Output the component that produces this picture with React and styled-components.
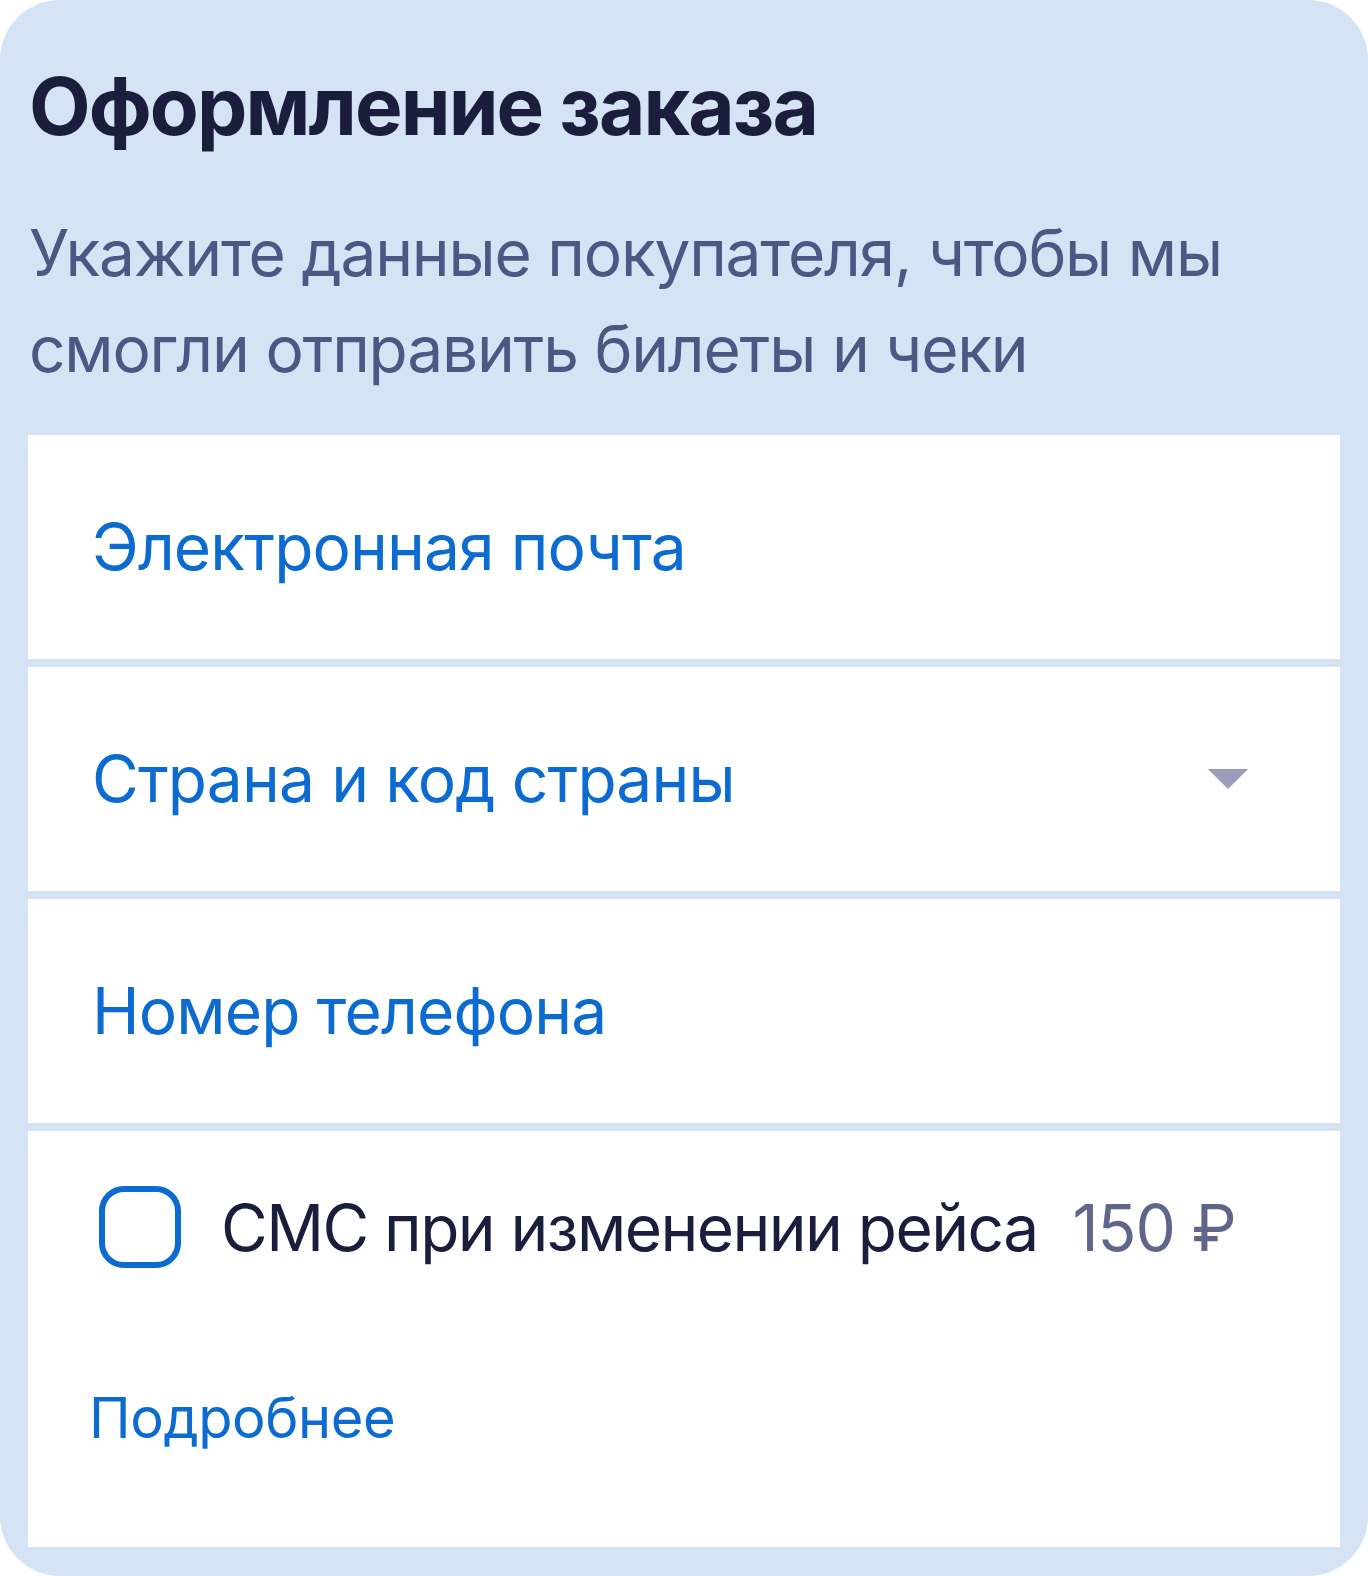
import React from "react";
import styled, { createGlobalStyle } from "styled-components";

const GlobalStyle = createGlobalStyle`
  html, body {
    margin: 0;
    padding: 0;
    background: #ffffff;
  }
  body {
    font-family: Inter, "Noto Sans", sans-serif;
  }
`;

const Card = styled.section`
  box-sizing: border-box;
  width: 1368px;
  min-height: 1576px;
  background: #d5e4f4;
  border-radius: 60px;
  padding: 58px 28px 28px;
  display: flex;
  flex-direction: column;
`;

const Title = styled.h1`
  margin: 0 0 0 1px;
  font-size: 80px;
  line-height: 96px;
  font-weight: 700;
  color: #1a1e3c;
  letter-spacing: -1.9px;
`;

const Subtitle = styled.p`
  margin: 51px 0 38px 1px;
  font-size: 64px;
  line-height: 96px;
  font-weight: 400;
  color: #4b5883;
  letter-spacing: -1.2px;
`;

const Fields = styled.div`
  display: flex;
  flex-direction: column;
  gap: 8px;
`;

const Field = styled.div`
  box-sizing: border-box;
  height: 224px;
  background: #ffffff;
  display: flex;
  align-items: center;
  justify-content: space-between;
  padding: 0 92px 0 64px;
`;

const Label = styled.span`
  font-size: 64px;
  line-height: 1;
  color: #0b6bd0;
  letter-spacing: -0.85px;
`;

const Caret = styled.span`
  width: 0;
  height: 0;
  border-left: 20px solid transparent;
  border-right: 20px solid transparent;
  border-top: 20px solid #9a9db9;
`;

const OptionBlock = styled.div`
  box-sizing: border-box;
  height: 416px;
  background: #ffffff;
  padding: 55px 0 0 71px;
  display: flex;
  flex-direction: column;
`;

const CheckRow = styled.label`
  display: flex;
  align-items: center;
  height: 82px;
  white-space: nowrap;
`;

const Box = styled.span`
  box-sizing: border-box;
  width: 82px;
  height: 82px;
  border: 6px solid #0b6bd0;
  border-radius: 25px;
  flex: none;
`;

const CheckText = styled.span`
  margin-left: 40px;
  font-size: 64px;
  color: #1a1e3c;
  letter-spacing: -1.55px;
`;

const Price = styled.span`
  margin-left: 35px;
  font-size: 64px;
  color: #5f6689;
  letter-spacing: -1px;
`;

const More = styled.a`
  align-self: flex-start;
  margin: 108px 0 0 -10px;
  font-size: 56px;
  line-height: 84px;
  color: #0b6bd0;
  text-decoration: none;
  letter-spacing: -0.4px;
`;

export default function App() {
  return (
    <>
      <GlobalStyle />
      <Card>
        <Title>Оформление заказа</Title>
        <Subtitle>
          Укажите данные покупателя, чтобы мы
          <br />
          смогли отправить билеты и чеки
        </Subtitle>
        <Fields>
          <Field>
            <Label>Электронная почта</Label>
          </Field>
          <Field>
            <Label>Страна и код страны</Label>
            <Caret />
          </Field>
          <Field>
            <Label>Номер телефона</Label>
          </Field>
          <OptionBlock>
            <CheckRow>
              <Box />
              <CheckText>СМС при изменении рейса</CheckText>
              <Price>150 ₽</Price>
            </CheckRow>
            <More href="#">Подробнее</More>
          </OptionBlock>
        </Fields>
      </Card>
    </>
  );
}
